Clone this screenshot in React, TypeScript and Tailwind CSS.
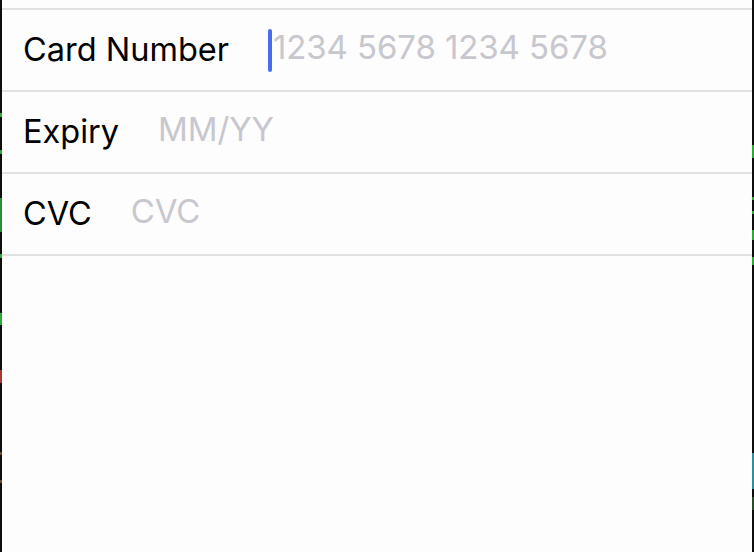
import React from "react"

const font = { fontFamily: "Inter, 'Noto Sans', sans-serif" }

// the phone's bezel along both edges, with a few coloured specks on it
const leftEdge: [number, string][] = [
  [113, "#0d0d0d"], [4, "#2fa83a"], [33, "#0d0d0d"], [4, "#2fa83a"], [44, "#0d0d0d"],
  [34, "#2b8f35"], [22, "#0d0d0d"], [4, "#2fa83a"], [55, "#0d0d0d"], [12, "#2fa83a"],
  [45, "#0d0d0d"], [13, "#a8392f"], [69, "#0d0d0d"], [3, "#6b4a2a"], [25, "#0d0d0d"],
  [3, "#6b4a2a"], [69, "#0d0d0d"],
]
const rightEdge: [number, string][] = [
  [145, "#0d0d0d"], [13, "#2fa83a"], [39, "#0d0d0d"], [3, "#2fa83a"], [11, "#0d0d0d"],
  [3, "#2fa83a"], [16, "#0d0d0d"], [10, "#2fa83a"], [17, "#0d0d0d"], [8, "#2fa83a"],
  [188, "#0d0d0d"], [36, "#2f8f9a"], [8, "#0d0d0d"], [13, "#2c4a2c"], [42, "#0d0d0d"],
]

function Edge({ parts }: { parts: [number, string][] }) {
  return (
    <div className="flex w-[2px] shrink-0 flex-col">
      {parts.map(([h, c], i) => (
        <div key={i} style={{ height: h, backgroundColor: c }} />
      ))}
    </div>
  )
}

function Row({
  label,
  placeholder,
  cursor,
}: {
  label: string
  placeholder: string
  cursor?: boolean
}) {
  return (
    <div className="flex h-[82px] items-center border-b-2 border-[#e1e1e1] pl-[21px]">
      <span className="text-[32.5px] leading-none text-black">{label}</span>
      <div className="ml-[39px] flex items-center">
        {cursor && <span className="mr-px h-[43px] w-[4px] rounded-[2px] bg-[#4a6cf1]" />}
        <span className="-mt-[6px] text-[33px] leading-none tracking-[-0.1px] text-[#c7c7cd]">
          {placeholder}
        </span>
      </div>
    </div>
  )
}

export default function App() {
  return (
    <div className="flex h-[552px] w-[754px] overflow-hidden bg-[#fdfdfd]" style={font}>
      <Edge parts={leftEdge} />
      <div className="flex-1 pt-2">
        <div className="h-[2px] bg-[#e1e1e1]" />
        <Row label="Card Number" placeholder="1234 5678 1234 5678" cursor />
        <Row label="Expiry" placeholder="MM/YY" />
        <Row label="CVC" placeholder="CVC" />
      </div>
      <Edge parts={rightEdge} />
    </div>
  )
}
